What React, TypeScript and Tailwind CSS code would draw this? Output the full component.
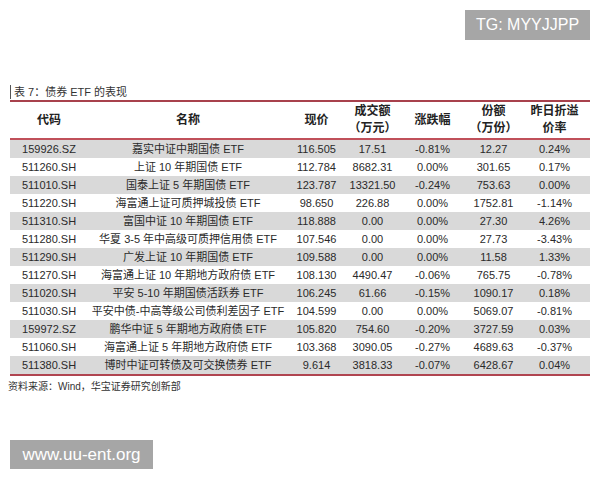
const rows = [
  ["159926.SZ", "嘉实中证中期国债 ETF", "116.505", "17.51", "-0.81%", "12.27", "0.24%"],
  ["511260.SH", "上证 10 年期国债 ETF", "112.784", "8682.31", "0.00%", "301.65", "0.17%"],
  ["511010.SH", "国泰上证 5 年期国债 ETF", "123.787", "13321.50", "-0.24%", "753.63", "0.00%"],
  ["511220.SH", "海富通上证可质押城投债 ETF", "98.650", "226.88", "0.00%", "1752.81", "-1.14%"],
  ["511310.SH", "富国中证 10 年期国债 ETF", "118.888", "0.00", "0.00%", "27.30", "4.26%"],
  ["511280.SH", "华夏 3-5 年中高级可质押信用债 ETF", "107.546", "0.00", "0.00%", "27.73", "-3.43%"],
  ["511290.SH", "广发上证 10 年期国债 ETF", "109.588", "0.00", "0.00%", "11.58", "1.33%"],
  ["511270.SH", "海富通上证 10 年期地方政府债 ETF", "108.130", "4490.47", "-0.06%", "765.75", "-0.78%"],
  ["511020.SH", "平安 5-10 年期国债活跃券 ETF", "106.245", "61.66", "-0.15%", "1090.17", "0.18%"],
  ["511030.SH", "平安中债-中高等级公司债利差因子 ETF", "104.599", "0.00", "0.00%", "5069.07", "-0.81%"],
  ["159972.SZ", "鹏华中证 5 年期地方政府债 ETF", "105.820", "754.60", "-0.20%", "3727.59", "0.03%"],
  ["511060.SH", "海富通上证 5 年期地方政府债 ETF", "103.368", "3090.05", "-0.27%", "4689.63", "-0.37%"],
  ["511380.SH", "博时中证可转债及可交换债券 ETF", "9.614", "3818.33", "-0.07%", "6428.67", "0.04%"],
];

const cols = "grid grid-cols-[78px_200px_57px_55px_65px_57px_65px]";
const font = "font-['Liberation_Sans','Noto_Sans_CJK_SC',sans-serif]";

export default function App() {
  return (
    <div className={`relative w-[600px] h-[480px] bg-white text-[#222] ${font}`}>
      <div className="px-[10px] pt-[85px]">
        {/* title */}
        <div className="border-b-2 border-[#a8414c] pb-[1px]">
          <div className="flex items-center h-[14px] pl-[3px] border-l border-[#555] text-[11px] text-[#333]">
            表 7：债券 ETF 的表现
          </div>
        </div>

        {/* header */}
        <div className={`${cols} h-[38px] items-center text-center text-[12px] font-bold leading-[17px] border-b-2 border-[#c0505a]`}>
          <div>代码</div>
          <div>名称</div>
          <div>现价</div>
          <div>
            <div>成交额</div>
            <div>（万元）</div>
          </div>
          <div>涨跌幅</div>
          <div>
            <div>份额</div>
            <div>（万份）</div>
          </div>
          <div>
            <div>昨日折溢</div>
            <div>价率</div>
          </div>
        </div>

        {/* body */}
        <div className="border-b-2 border-[#b04550]">
          {rows.map((r, i) => (
            <div
              key={r[0]}
              className={`${cols} h-[18px] items-center text-center text-[11px] text-[#2a2a2a] ${i % 2 === 0 ? "bg-[#d9d9d9]" : "bg-white"}`}
            >
              {r.map((c, j) => (
                <div key={j} className="whitespace-nowrap">{c}</div>
              ))}
            </div>
          ))}
        </div>

        <div className="mt-[3px] -ml-[2px] text-[10px] text-[#333]">资料来源：Wind，华宝证券研究创新部</div>
      </div>

      {/* watermarks */}
      <div className="absolute left-[465px] top-[10px] w-[125px] h-[30px] bg-[#a6a6a6] flex items-center justify-center text-white text-[16px] font-['Liberation_Sans',sans-serif]">
        TG: MYYJJPP
      </div>
      <div className="absolute left-[10px] top-[440px] w-[143px] h-[29px] bg-[#a6a6a6] flex items-center justify-center text-white text-[17px] font-['Liberation_Sans',sans-serif]">
        www.uu-ent.org
      </div>
    </div>
  );
}
